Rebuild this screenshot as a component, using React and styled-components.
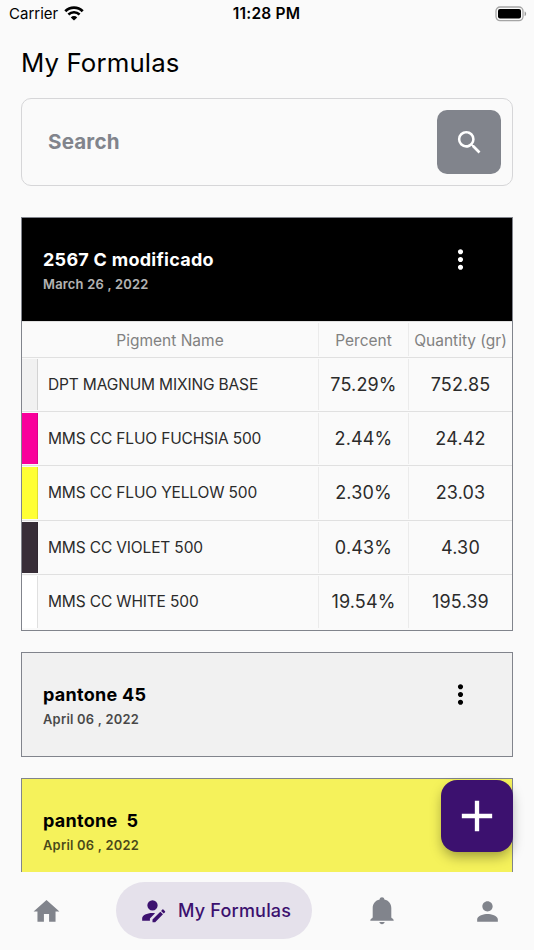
import React from 'react'
import styled, { createGlobalStyle } from 'styled-components'
import { MdAdd, MdHome, MdMoreVert, MdPerson, MdSearch } from 'react-icons/md'

const Colors = {
  background: '#fafafa',
  gray: '#81848c',
  line: '#e0e0e0',
  purple: '#3c116f',
  pill: '#e5e1eb',
}

const GlobalStyle = createGlobalStyle`
  * {
    box-sizing: border-box;
  }

  body {
    margin: 0;
    background-color: ${Colors.background};
    font-family: Inter, 'Liberation Sans', sans-serif;
  }

  svg {
    display: block;
  }
`

const Screen = styled('div')`
  position: relative;
  width: 534px;
  height: 950px;
  display: flex;
  flex-direction: column;
  overflow: hidden;
  background-color: ${Colors.background};
`

const StatusBar = styled('div')`
  height: 28px;
  padding: 0 7px 0 9px;
  display: grid;
  grid-template-columns: 1fr auto 1fr;
  align-items: center;
  font-size: 15.5px;
  line-height: 28px;
`

const Carrier = styled('div')`
  display: flex;
  align-items: center;
  gap: 6px;
  font-size: 15px;

  svg {
    margin-bottom: 2px;
  }
`

const Time = styled('div')`
  margin-left: -3px;
  font-weight: 600;
  letter-spacing: 0.2px;
`

const Battery = styled('div')`
  display: flex;
  justify-content: flex-end;
`

const Title = styled('h1')`
  margin: 0;
  padding: 16px 0 0 21px;
  height: 70px;
  font-size: 25.8px;
  font-weight: 400;
  line-height: 37px;
  letter-spacing: 0.12px;
`

const SearchBox = styled('div')`
  height: 88px;
  margin: 0 21px;
  padding: 0 11px 0 26px;
  display: flex;
  flex-shrink: 0;
  align-items: center;
  justify-content: space-between;
  border: 1px solid #d6d6d8;
  border-radius: 10px;
`

const Placeholder = styled('span')`
  padding-bottom: 2px;
  color: ${Colors.gray};
  font-size: 20.6px;
  font-weight: 700;
  letter-spacing: 0.15px;
`

const SearchButton = styled('div')`
  width: 64px;
  height: 64px;
  display: flex;
  align-items: center;
  justify-content: center;
  border-radius: 10px;
  color: #fff;
  background-color: ${Colors.gray};
`

const List = styled('div')`
  height: 686px;
  padding: 31px 21px 0;
  display: flex;
  flex-direction: column;
  gap: 21px;
  flex-shrink: 0;
  overflow: hidden;
`

const Card = styled('div')`
  flex-shrink: 0;
  border: 1px solid ${Colors.gray};
`

const CardHeader = styled('div')`
  height: 103px;
  padding: 28px 36px 0 21px;
  display: flex;
  justify-content: space-between;
  color: ${props => props.$color};
  background-color: ${props => props.$background};
`

const Name = styled('div')`
  font-size: 18px;
  font-weight: 700;
  line-height: 27px;
  letter-spacing: 0.27px;
  white-space: pre;
`

const DateLabel = styled('div')`
  font-size: 12.9px;
  font-weight: 600;
  line-height: 23px;
  letter-spacing: 0.24px;
  opacity: 0.7;
`

const Table = styled('div')`
  padding-bottom: 1px;
  border-top: 1px solid ${Colors.line};
`

const Row = styled('div')`
  display: grid;
  grid-template-columns: 297px 90px 1fr;
  height: ${props => (props.$head ? '36px' : '54.2px')};
  border-bottom: ${props => (props.$last ? '0' : `1px solid ${Colors.line}`)};
  color: ${props => (props.$head ? '#818181' : '#2b2b2b')};
`

const Cell = styled('div')`
  margin: 1px 0;
  padding-top: ${props => (props.$head ? '1px' : '0')};
  display: flex;
  align-items: center;
  justify-content: center;
  border-right: ${props => (props.$end ? '0' : '1px solid #ebebeb')};
  font-size: ${props => (props.$head ? '15.5px' : '18px')};
  letter-spacing: ${props => (props.$head ? '0' : '0.15px')};
  white-space: nowrap;
`

const PigmentCell = styled(Cell)`
  justify-content: flex-start;
  font-size: 15.5px;
  letter-spacing: -0.15px;
`

const Swatch = styled('div')`
  align-self: stretch;
  width: 16px;
  margin-right: 10px;
  border-right: 1px solid rgba(0, 0, 0, 0.12);
  background-color: ${props => props.$color};
`

const Fab = styled('div')`
  position: absolute;
  right: 21px;
  bottom: 98.5px;
  width: 72px;
  height: 72px;
  display: flex;
  align-items: center;
  justify-content: center;
  border-radius: 16px;
  color: #fff;
  background-color: ${Colors.purple};
  box-shadow: 0 6px 13px -2px rgba(0, 0, 0, 0.38);
`

const NavBar = styled('div')`
  position: relative;
  height: 78px;
  padding: 10px 10.5px 11px;
  display: flex;
  align-items: center;
  gap: 33.5px;
  color: ${Colors.gray};
  background-color: ${Colors.background};
`

const Tab = styled('div')`
  width: 72px;
  padding-top: 1px;
  display: flex;
  justify-content: center;
`

const ActiveTab = styled('div')`
  width: 196px;
  height: 57px;
  padding-left: 21px;
  display: flex;
  align-items: center;
  gap: 10px;
  border-radius: 29px;
  color: ${Colors.purple};
  background-color: ${Colors.pill};
  font-size: 18px;
  font-weight: 500;
  letter-spacing: 0.2px;
`

const WifiIcon = () => (
  <svg width="20" height="15" viewBox="0 0 20 15" fill="none">
    <path d="M1.3 5.2a12.4 12.4 0 0 1 17.4 0" stroke="#000" strokeWidth="2.8" />
    <path d="M4.4 8.5a8 8 0 0 1 11.2 0" stroke="#000" strokeWidth="2.5" />
    <path d="M10 14.6 6.8 11.4a4.6 4.6 0 0 1 6.4 0z" fill="#000" />
  </svg>
)

const BatteryIcon = () => (
  <svg width="32" height="16" viewBox="0 0 32 16">
    <rect x="1" y="1" width="27" height="13.6" rx="4" fill="none" stroke="#a5a5a5" strokeWidth="1.3" />
    <rect x="3" y="3" width="23" height="9.6" rx="2" />
    <path d="M29.6 5.5c2 .7 2 3.9 0 4.6z" fill="#999" />
  </svg>
)

const AccountEditIcon = () => (
  <svg width="31" height="31" viewBox="0 0 24 24" fill="currentColor">
    <path d="M21.7 13.35l-1 1-2.05-2.05 1-1a.55.55 0 0 1 .77 0l1.28 1.28c.21.21.21.56 0 .77M12 18.94l6.06-6.06 2.05 2.05L14.06 21H12v-2.06M12 14c-4.42 0-8 1.79-8 4v2h6v-1.89l4-4c-.66-.08-1.33-.11-2-.11m0-10a4 4 0 1 0 0 8 4 4 0 0 0 0-8z" />
  </svg>
)

const BellIcon = () => (
  <svg width="24" height="28" viewBox="0 0 24 28" fill="currentColor">
    <path d="M12 .2c1.3 0 2.2.9 2.4 2.3 4.2.9 6.9 4.3 6.9 8.5v8.7c0 1 .4 1.4 1.2 1.9.8.5 1.2 1.1 1.2 2.2H.3c0-1.1.4-1.7 1.2-2.2.8-.5 1.2-.9 1.2-1.9V11c0-4.2 2.7-7.6 6.9-8.5C9.8 1.1 10.7.2 12 .2z" />
    <path d="M9.4 25h5.2c-.2 1.4-1.2 2.2-2.6 2.2s-2.4-.8-2.6-2.2z" />
  </svg>
)

const pigments = [
  { name: 'DPT MAGNUM MIXING BASE', color: '#f1f1f1', percent: '75.29%', quantity: '752.85' },
  { name: 'MMS CC FLUO FUCHSIA 500', color: '#f9009b', percent: '2.44%', quantity: '24.42' },
  { name: 'MMS CC FLUO YELLOW 500', color: '#ffff35', percent: '2.30%', quantity: '23.03' },
  { name: 'MMS CC VIOLET 500', color: '#382e38', percent: '0.43%', quantity: '4.30' },
  { name: 'MMS CC WHITE 500', color: '#ffffff', percent: '19.54%', quantity: '195.39' },
]

const MoreIcon = styled(MdMoreVert)`
  margin-top: -2px;
`

const FormulaCard = ({ name, date, color = '#000', background, children }) => (
  <Card>
    <CardHeader $color={color} $background={background}>
      <div>
        <Name>{name}</Name>
        <DateLabel>{date}</DateLabel>
      </div>
      <MoreIcon size={31} />
    </CardHeader>
    {children}
  </Card>
)

const PigmentTable = () => (
  <Table>
    <Row $head>
      <Cell $head>Pigment Name</Cell>
      <Cell $head>Percent</Cell>
      <Cell $head $end>
        Quantity (gr)
      </Cell>
    </Row>
    {pigments.map(({ name, color, percent, quantity }, index) => (
      <Row key={name} $last={index === pigments.length - 1}>
        <PigmentCell>
          <Swatch $color={color} />
          {name}
        </PigmentCell>
        <Cell>{percent}</Cell>
        <Cell $end>{quantity}</Cell>
      </Row>
    ))}
  </Table>
)

const App = () => (
  <>
    <GlobalStyle />
    <Screen>
      <StatusBar>
        <Carrier>
          Carrier
          <WifiIcon />
        </Carrier>
        <Time>11:28 PM</Time>
        <Battery>
          <BatteryIcon />
        </Battery>
      </StatusBar>
      <Title>My Formulas</Title>
      <SearchBox>
        <Placeholder>Search</Placeholder>
        <SearchButton>
          <MdSearch size={31} />
        </SearchButton>
      </SearchBox>
      <List>
        <FormulaCard name="2567 C modificado" date="March 26 , 2022" color="#fff" background="#000">
          <PigmentTable />
        </FormulaCard>
        <FormulaCard name="pantone 45" date="April 06 , 2022" background="#f1f1f1" />
        <FormulaCard name="pantone  5" date="April 06 , 2022" background="#f5f25b" />
      </List>
      <Fab>
        <MdAdd size={52} />
      </Fab>
      <NavBar>
        <Tab>
          <MdHome size={31} />
        </Tab>
        <ActiveTab>
          <AccountEditIcon />
          My Formulas
        </ActiveTab>
        <Tab>
          <BellIcon />
        </Tab>
        <Tab>
          <MdPerson size={31} />
        </Tab>
      </NavBar>
    </Screen>
  </>
)

export default App
